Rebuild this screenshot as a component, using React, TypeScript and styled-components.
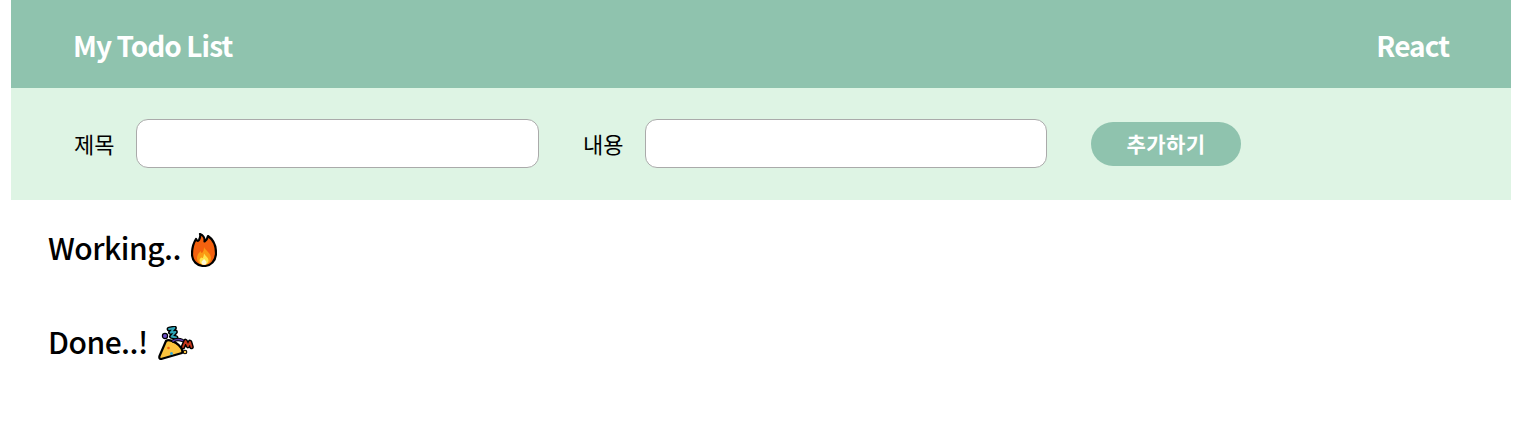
import React from "react";
import styled, { createGlobalStyle } from "styled-components";

const Global = createGlobalStyle`
  html, body { margin: 0; padding: 0; background: #fff; }
  body { font-family: "Noto Sans CJK KR", "Noto Sans", sans-serif; color: #000; }
`;

const Page = styled.div`
  width: 1500px;
  margin-left: 11px;
`;

const Header = styled.header`
  height: 88px;
  box-sizing: border-box;
  background: #8fc3ae;
  display: flex;
  align-items: center;
  justify-content: space-between;
  padding: 1px 62px 0;
  color: #fff;
  font-size: 28px;
  font-weight: 700;
  letter-spacing: -0.95px;
`;

const Form = styled.form`
  height: 112px;
  background: #def4e4;
  display: flex;
  align-items: center;
  padding: 0 0 0 63px;
`;

const Label = styled.label`
  font-size: 22px;
  width: 62px;
  flex: none;
  line-height: 1;
  margin-bottom: 2px;
`;

const Input = styled.input<{ $width: number }>`
  width: ${(p) => p.$width}px;
  height: 49px;
  box-sizing: border-box;
  border: 1px solid #aaa;
  border-radius: 12px;
  background: #fff;
  margin: 0 44px 1px 0;
  outline: none;
`;

const AddButton = styled.button`
  width: 150px;
  height: 44px;
  border: none;
  border-radius: 22px;
  background: #8fc3ae;
  color: #fff;
  font-family: inherit;
  font-size: 21px;
  letter-spacing: 0.4px;
  font-weight: 700;
  padding: 0 0 2px;
  line-height: 1;
`;

const Section = styled.section<{ $height: number; $gap: number }>`
  height: ${(p) => p.$height}px;
  padding: 0 0 4px 37px;
  box-sizing: border-box;
  display: flex;
  align-items: center;
  gap: ${(p) => p.$gap}px;
  font-size: 30px;
  font-weight: 500;
  letter-spacing: -0.5px;
`;

const FireIcon = styled.svg`
  width: 26px;
  height: 34px;
  flex: none;
  margin-top: 6px;
`;

const PartyIcon = styled.svg`
  width: 36px;
  height: 34px;
  flex: none;
  margin-top: 4px;
`;

const Fire = () => (
  <FireIcon viewBox="0 0 26 34" role="img" aria-label="fire">
    <path
      d="M9 1C12 2 14 5 13.500 8.500C15 7.500 16.500 5.500 17 3C21.500 6 25 12 25 20C25 28 19.500 33 13 33C6 33 1 28 1 21C1 15 2.500 10 5 6C5.800 8 7 8.500 8 7C9 5 9.800 3 9 1Z"
      fill="#f4610f"
      stroke="#000"
      strokeWidth="2.200"
      strokeLinejoin="round"
    />
    <path d="M13 14C14 17 20 20 20 25C20 29 17 31.800 13 31.800C9 31.800 6 29 6 25C6 22 8 20 9.500 18C10 19.500 10.500 20 11 20C12.500 18.500 13 16.500 13 14Z" fill="#fb9a14" />
    <path d="M13 20.500C14 22.500 17.500 24.500 17.500 27.500C17.500 30 15.500 31.800 13 31.800C10.500 31.800 8.500 30 8.500 27.500C8.500 26 9.500 25 10.300 24.200C10.800 25 11.300 25.200 11.700 25C12.500 24 12.800 22.500 13 20.500Z" fill="#ffe44d" />
    <path d="M13 26C14 27 15.500 28.200 15.500 29.500C15.500 31 14.300 31.800 13 31.800C11.700 31.800 10.500 31 10.500 29.500C10.500 28 12 27.500 13 26Z" fill="#fff8d8" />
  </FireIcon>
);

const Party = () => (
  <PartyIcon viewBox="0 0 36 34" role="img" aria-label="party popper">
    <path d="M8 15L1.500 30C.8 32.500 2 33.500 4 32.700L24 27C25.500 24 22 19.500 18 17C14 14.500 10 13.500 8 15Z" fill="#fcc43e" stroke="#000" strokeWidth="2.200" strokeLinejoin="round" />
    <circle cx="10.500" cy="22" r="1.300" fill="#f4610f" />
    <circle cx="13.500" cy="27.500" r="1.500" fill="#2fa8d8" />
    <path d="M11 3L16.500 2L12.500 6.500L17.500 6L13.500 10.500L18 11.500" fill="none" stroke="#000" strokeWidth="4.800" strokeLinejoin="round" strokeLinecap="round" />
    <path d="M11 3L16.500 2L12.500 6.500L17.500 6L13.500 10.500L18 11.500" fill="none" stroke="#2da5b8" strokeWidth="1.800" strokeLinejoin="round" strokeLinecap="round" />
    <path d="M25 21L27.500 15L30 20L32 16L33.500 21" fill="none" stroke="#000" strokeWidth="4.600" strokeLinejoin="round" strokeLinecap="round" />
    <path d="M25 21L27.500 15L30 20L32 16L33.500 21" fill="none" stroke="#c6361c" strokeWidth="1.800" strokeLinejoin="round" strokeLinecap="round" />
    <path d="M15 15C17.500 13.500 21 13 24.500 14.500" fill="none" stroke="#000" strokeWidth="3.400" strokeLinecap="round" />
    <path d="M15 15C17.500 13.500 21 13 24.500 14.500" fill="none" stroke="#5b3ea8" strokeWidth="1.600" strokeLinecap="round" />
    <circle cx="7" cy="10" r="2.600" fill="#6a4cc4" stroke="#000" strokeWidth="1.200" />
    <circle cx="27" cy="26" r="1.800" fill="#fcc43e" stroke="#000" strokeWidth="1.100" />
  </PartyIcon>
);

export default function App() {
  return (
    <>
      <Global />
      <Page>
        <Header>
          <span>My Todo List</span>
          <span>React</span>
        </Header>
        <Form onSubmit={(e) => e.preventDefault()}>
          <Label>제목</Label>
          <Input $width={403} />
          <Label>내용</Label>
          <Input $width={402} />
          <AddButton type="button">추가하기</AddButton>
        </Form>
        <Section $height={98} $gap={10}>
          Working..
          <Fire />
        </Section>
        <Section $height={90} $gap={10}>
          Done..!
          <Party />
        </Section>
      </Page>
    </>
  );
}
